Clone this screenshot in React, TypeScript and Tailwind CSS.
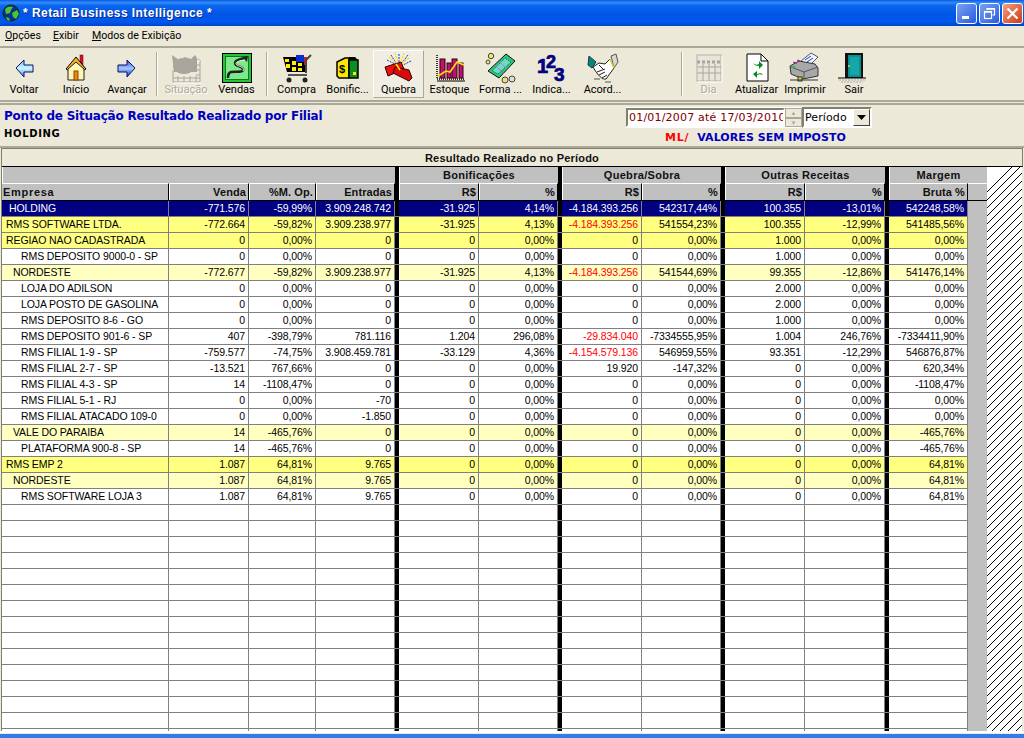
import React from "react";

const W = { e: "w-[167px]", v: "w-[80px]", m: "w-[67px]", n: "w-[79px]", a: "w-[80px]", b: "w-[79px]", c: "w-[80px]", d: "w-[79px]", f: "w-[80px]", g: "w-[80px]", h: "w-[79px]" };

type Row = { name: string; pad: string; bg: string; t?: string; red?: boolean; v: string[] };
const Y = "bg-[#ffff80]";
const L = "bg-[#ffffc0]";
const N = "bg-white";
const rows: Row[] = [
  { name: "HOLDING", pad: "pl-[7px]", bg: "bg-[#000080]", t: "text-white", v: ["-771.576", "-59,99%", "3.909.248.742", "-31.925", "4,14%", "-4.184.393.256", "542317,44%", "100.355", "-13,01%", "542248,58%"] },
  { name: "RMS SOFTWARE LTDA.", pad: "pl-[4px]", bg: Y, red: true, v: ["-772.664", "-59,82%", "3.909.238.977", "-31.925", "4,13%", "-4.184.393.256", "541554,23%", "100.355", "-12,99%", "541485,56%"] },
  { name: "REGIAO NAO CADASTRADA", pad: "pl-[4px]", bg: Y, v: ["0", "0,00%", "0", "0", "0,00%", "0", "0,00%", "1.000", "0,00%", "0,00%"] },
  { name: "RMS DEPOSITO 9000-0 - SP", pad: "pl-[19px]", bg: N, v: ["0", "0,00%", "0", "0", "0,00%", "0", "0,00%", "1.000", "0,00%", "0,00%"] },
  { name: "NORDESTE", pad: "pl-[11px]", bg: L, red: true, v: ["-772.677", "-59,82%", "3.909.238.977", "-31.925", "4,13%", "-4.184.393.256", "541544,69%", "99.355", "-12,86%", "541476,14%"] },
  { name: "LOJA DO ADILSON", pad: "pl-[19px]", bg: N, v: ["0", "0,00%", "0", "0", "0,00%", "0", "0,00%", "2.000", "0,00%", "0,00%"] },
  { name: "LOJA POSTO DE GASOLINA", pad: "pl-[19px]", bg: N, v: ["0", "0,00%", "0", "0", "0,00%", "0", "0,00%", "2.000", "0,00%", "0,00%"] },
  { name: "RMS DEPOSITO 8-6 - GO", pad: "pl-[19px]", bg: N, v: ["0", "0,00%", "0", "0", "0,00%", "0", "0,00%", "1.000", "0,00%", "0,00%"] },
  { name: "RMS DEPOSITO 901-6 - SP", pad: "pl-[19px]", bg: N, red: true, v: ["407", "-398,79%", "781.116", "1.204", "296,08%", "-29.834.040", "-7334555,95%", "1.004", "246,76%", "-7334411,90%"] },
  { name: "RMS FILIAL 1-9 - SP", pad: "pl-[19px]", bg: N, red: true, v: ["-759.577", "-74,75%", "3.908.459.781", "-33.129", "4,36%", "-4.154.579.136", "546959,55%", "93.351", "-12,29%", "546876,87%"] },
  { name: "RMS FILIAL 2-7 - SP", pad: "pl-[19px]", bg: N, v: ["-13.521", "767,66%", "0", "0", "0,00%", "19.920", "-147,32%", "0", "0,00%", "620,34%"] },
  { name: "RMS FILIAL 4-3 - SP", pad: "pl-[19px]", bg: N, v: ["14", "-1108,47%", "0", "0", "0,00%", "0", "0,00%", "0", "0,00%", "-1108,47%"] },
  { name: "RMS FILIAL 5-1 - RJ", pad: "pl-[19px]", bg: N, v: ["0", "0,00%", "-70", "0", "0,00%", "0", "0,00%", "0", "0,00%", "0,00%"] },
  { name: "RMS FILIAL ATACADO 109-0", pad: "pl-[19px]", bg: N, v: ["0", "0,00%", "-1.850", "0", "0,00%", "0", "0,00%", "0", "0,00%", "0,00%"] },
  { name: "VALE DO PARAIBA", pad: "pl-[11px]", bg: L, v: ["14", "-465,76%", "0", "0", "0,00%", "0", "0,00%", "0", "0,00%", "-465,76%"] },
  { name: "PLATAFORMA 900-8 - SP", pad: "pl-[19px]", bg: N, v: ["14", "-465,76%", "0", "0", "0,00%", "0", "0,00%", "0", "0,00%", "-465,76%"] },
  { name: "RMS EMP 2", pad: "pl-[4px]", bg: Y, v: ["1.087", "64,81%", "9.765", "0", "0,00%", "0", "0,00%", "0", "0,00%", "64,81%"] },
  { name: "NORDESTE", pad: "pl-[11px]", bg: L, v: ["1.087", "64,81%", "9.765", "0", "0,00%", "0", "0,00%", "0", "0,00%", "64,81%"] },
  { name: "RMS SOFTWARE LOJA 3", pad: "pl-[19px]", bg: N, v: ["1.087", "64,81%", "9.765", "0", "0,00%", "0", "0,00%", "0", "0,00%", "64,81%"] },
];
const blank: Row = { name: "", pad: "", bg: N, v: ["", "", "", "", "", "", "", "", "", ""] };
const allRows = [...rows, ...Array.from({ length: 15 }, () => blank)];
const widths = [W.v, W.m, W.n, W.a, W.b, W.c, W.d, W.f, W.g, W.h];
const blackAfter = [2, 4, 6, 8];

function Black() {
  return <div className="w-[4px] shrink-0 self-stretch bg-black" />;
}

function Cell({ w, children, cls = "" }: { w: string; children?: React.ReactNode; cls?: string }) {
  return <div className={`${w} ${cls} shrink-0 h-full border-r border-[#808080] text-right pr-[3px] whitespace-nowrap overflow-hidden`}>{children}</div>;
}

function DataRow({ r }: { r: Row }) {
  return (
    <div className={`flex h-[16px] border-b border-[#808080] leading-[15px] text-[10.5px] tracking-[-0.1px] ${r.bg} ${r.t ?? "text-black"}`}>
      <div className={`w-[167px] shrink-0 border-r border-[#808080] whitespace-nowrap overflow-hidden ${r.pad}`}>{r.name}</div>
      {r.v.map((val, i) => (
        <React.Fragment key={i}>
          <Cell w={widths[i]} cls={r.red && i === 5 ? "text-[#ff0000]" : ""}>{val}</Cell>
          {blackAfter.includes(i) && <Black />}
        </React.Fragment>
      ))}
    </div>
  );
}

const headCls = "shrink-0 h-full bg-[#c0c0c0] border-t border-l border-t-white border-l-white border-r border-r-black font-bold leading-[16px] pr-[2px] text-right text-[#111]";

function Head({ w, children, left }: { w: string; children: React.ReactNode; left?: boolean }) {
  return <div className={`${w} ${headCls} ${left ? "!text-left tracking-[0.7px] !border-l-0 pl-[1px]" : "tracking-[0.1px]"}`}>{children}</div>;
}

function Group({ w, children }: { w: string; children?: React.ReactNode }) {
  return <div className={`${w} shrink-0 h-full bg-[#c0c0c0] border-l border-white text-center font-bold tracking-[0.3px] leading-[17px] text-[#111]`}>{children}</div>;
}

/* ------- icons ------- */
const Arrow = ({ right }: { right?: boolean }) => (
  <svg width="32" height="32" viewBox="0 0 32 32" className={right ? "-scale-x-100" : ""}>
    <defs>
      <linearGradient id={right ? "ar" : "al"} x1="0" x2="0" y1="0" y2="1">
        <stop offset="0" stopColor={right ? "#2a50f0" : "#60c8ff"} />
        <stop offset="0.5" stopColor={right ? "#a0c8ff" : "#d0f4ff"} />
        <stop offset="1" stopColor={right ? "#1030e0" : "#1d86e0"} />
      </linearGradient>
    </defs>
    <path d="M8 16 16 8v5h9v7h-9v5z" fill={`url(#${right ? "ar" : "al"})`} stroke="#10106a" strokeWidth="1" />
  </svg>
);
const House = () => (
  <svg width="32" height="32" viewBox="0 0 32 32">
    <rect x="20" y="3" width="3" height="10" fill="#d01030" stroke="#700" strokeWidth=".5" />
    <path d="M6 17 16 5l10 12-2 1-8-8-8 8z" fill="#ffb020" stroke="#000" strokeWidth="1" />
    <path d="M8 17l8-7 8 7v11H8z" fill="#fff6b8" stroke="#222" strokeWidth="1" />
    <rect x="14" y="19" width="4" height="9" fill="#e88a10" stroke="#8a4a00" strokeWidth="1" />
  </svg>
);
const Situacao = () => (
  <svg width="32" height="32" viewBox="0 0 32 32">
    <path d="M2 3l7 5 6-3 6 2 4-4 2 3v14H4z" fill="#a8a69c" />
    <ellipse cx="14" cy="14" rx="11" ry="8" fill="#a8a69c" />
    <path d="M26 8h4v22H3V18M26 13h4M26 18h4M26 23h4M8 24v6M14 24v6M20 24v6M26 24v6M3 26h27" fill="none" stroke="#a8a69c" strokeWidth="1" />
    <path d="M27 9h3M4 31h27" stroke="#fff" strokeWidth="1" />
  </svg>
);
const Vendas = () => (
  <svg width="30" height="30" viewBox="0 0 30 30">
    <rect x="0.5" y="0.5" width="29" height="29" fill="#27c33b" stroke="#000" />
    <rect x="3.5" y="3.5" width="23" height="23" fill="#7ee88a" stroke="#0a7a1a" />
    <path d="M24 5C15 6 11 9 14 12c3 2 8 2 7 5-1 3-8 1-12 2-3 1-3 3-3 6" fill="none" stroke="#222" strokeWidth="2.5" />
    <path d="M20 4l6-1-1 6z" fill="#222" />
    <path d="M23 7C15 8 12 10 15 12c3 2 8 2 6 6" fill="none" stroke="#d8ffd8" strokeWidth="1" />
  </svg>
);
const Cart = () => (
  <svg width="32" height="32" viewBox="0 0 32 32">
    <path d="M2 5h24v15H6z" fill="#000" />
    <path d="M4 7h4v3H4zM5 12h4v4H5zM11 9h4v4h-4zM11 15h4v4h-4zM17 11h4v3h-4zM17 16h4v3h-4z" fill="#ffee00" />
    <rect x="15" y="3" width="8" height="7" fill="#0a2bd0" />
    <rect x="23" y="5" width="3" height="8" fill="#e01020" />
    <path d="M25 21V8l5-5" stroke="#444" strokeWidth="2" fill="none" />
    <path d="M7 23h19" stroke="#555" strokeWidth="2" />
    <circle cx="8" cy="28" r="2.5" fill="#222" />
    <circle cx="24" cy="28" r="2.5" fill="#222" />
  </svg>
);
const Bonific = () => (
  <svg width="32" height="32" viewBox="0 0 32 32">
    <path d="M5 10 13 6h4v20H7l-2-2z" fill="#ffe600" stroke="#000" strokeWidth="1.5" />
    <path d="M17 8h9v18H17z" fill="#0b8f24" stroke="#000" strokeWidth="1.5" />
    <path d="M17 5h6l3 3H17z" fill="#000" />
    <rect x="21" y="20" width="3" height="3" fill="#ffe600" />
    <text x="7" y="21" fontFamily="Liberation Sans" fontWeight="700" fontSize="11" fill="#000">$</text>
  </svg>
);
const Dynamite = () => (
  <svg width="32" height="32" viewBox="0 0 32 32">
    <g stroke="#2030d0" strokeWidth="1" strokeDasharray="2 1">
      <path d="M16 2v8M8 3l5 8M25 3l-6 8M4 8l8 4M28 9l-8 4" />
    </g>
    <g stroke="#f0e000" strokeWidth="1.2" strokeDasharray="2 1">
      <path d="M12 1l3 9M21 1l-3 9M6 5l7 6M26 6l-7 5" />
    </g>
    <path d="M2 15 18 10l3 7-16 7z" fill="#ee1010" stroke="#300" strokeWidth="1" />
    <path d="M12 15l14 3 3 8-3 3-16-8z" fill="#d80c0c" stroke="#300" strokeWidth="1" />
    <path d="M13 12l4 6" stroke="#fff000" strokeWidth="1.5" />
  </svg>
);
const Chart = () => (
  <svg width="32" height="32" viewBox="0 0 32 32">
    <path d="M3 3v24h28" stroke="#000" fill="none" strokeWidth="1.5" strokeDasharray="1 1" />
    <rect x="6" y="7" width="5" height="19" fill="#c01070" stroke="#301" />
    <rect x="13" y="11" width="4" height="15" fill="#c01070" stroke="#301" />
    <rect x="18" y="7" width="5" height="19" fill="#c01070" stroke="#301" />
    <rect x="25" y="11" width="4" height="15" fill="#c01070" stroke="#301" />
    <path d="M4 24l8-5 4 1 7-10 7 3" stroke="#ffe000" strokeWidth="1.6" fill="none" />
    <path d="M3 29h28" stroke="#000" />
  </svg>
);
const Forma = () => (
  <svg width="32" height="32" viewBox="0 0 32 32">
    <path d="M3 19 21 2l9 7-16 17z" fill="#28c878" stroke="#111" strokeWidth="1" />
    <path d="M7 19 20 6l6 4-13 12z" fill="#6fd8c8" stroke="#0a6040" strokeWidth="1" strokeDasharray="1 1" />
    <path d="M10 13l9 9M14 9l9 9" stroke="#c060c0" strokeWidth=".7" />
    <circle cx="6" cy="4" r="2.7" fill="#f4e46a" stroke="#444" />
    <circle cx="3" cy="10" r="2" fill="#f4e46a" stroke="#444" />
    <circle cx="20" cy="28" r="3" fill="#e8e070" stroke="#444" />
    <circle cx="27" cy="27" r="3" fill="#ddd" stroke="#444" />
  </svg>
);
const Indica = () => (
  <svg width="32" height="32" viewBox="0 0 32 32" fontFamily="Liberation Sans" fontWeight="700" fill="#000080" stroke="#000080" strokeWidth=".7">
    <text x="1" y="21" fontSize="20">1</text>
    <text x="10" y="16" fontSize="18">2</text>
    <text x="18" y="29" fontSize="19">3</text>
  </svg>
);
const Hands = () => (
  <svg width="32" height="32" viewBox="0 0 32 32">
    <path d="M2 4l7 6-4 6-4-3z" fill="#108080" stroke="#044" />
    <path d="M24 4l5-2 2 8-4 6z" fill="#d8d8d0" stroke="#555" />
    <path d="M6 15l6-4 6 1 5-5 4 9-8 11c-3 1-8-3-13-12z" fill="#fff" stroke="#222" />
    <path d="M10 20l8-3M12 23l6-3M15 26l5-3M12 13l5 5" stroke="#222" fill="none" />
    <path d="M23 7l4 9" stroke="#e8d820" strokeWidth="1.5" />
    <path d="M7 27h6M18 30h6" stroke="#555" />
  </svg>
);
const Calendar = () => (
  <svg width="32" height="32" viewBox="0 0 32 32">
    <rect x="4" y="3" width="24" height="26" fill="#e8e6da" stroke="#b4b2a8" />
    <path d="M4 10h24" stroke="#a8a69c" strokeWidth="3" strokeDasharray="3 2" />
    <path d="M4 15h24M4 21h24M10 12v17M16 12v17M22 12v17" stroke="#a8a69c" />
    <path d="M29 4v26H5" stroke="#fff" fill="none" />
  </svg>
);
const Doc = () => (
  <svg width="32" height="32" viewBox="0 0 32 32">
    <path d="M6 2h14l7 7v20H6z" fill="#fff" stroke="#000" strokeWidth="1" />
    <path d="M20 2v7h7" fill="none" stroke="#000" />
    <path d="M12 11c2 2 4 2 6 1v-3l4 4-4 4v-3c-3 0-5-1-6-3z" fill="#0a8a1a" />
    <path d="M22 20c-2-1-4-1-6 0v3l-4-4 4-3v3c3-1 5-1 6 1z" fill="#0a8a1a" transform="translate(0 3)" />
  </svg>
);
const Printer = () => (
  <svg width="32" height="32" viewBox="0 0 32 32">
    <path d="M12 9 22 1l7 4-9 9z" fill="#f4f4ff" stroke="#556" />
    <path d="M16 8l6-4M18 10l6-4" stroke="#2040c0" />
    <path d="M1 14l9-5 16 3 3 4v8L14 27 2 22z" fill="#a8a8a8" stroke="#333" />
    <path d="M2 15l13 5 14-5M15 20v7" stroke="#555" fill="none" />
    <path d="M4 10l4 1M8 8l3 1" stroke="#a010a0" />
    <path d="M3 15h3" stroke="#20c040" strokeWidth="2" />
    <rect x="9" y="25" width="4" height="4" fill="#e8d820" stroke="#333" />
    <path d="M1 28h28" stroke="#333" />
  </svg>
);
const Door = () => (
  <svg width="32" height="32" viewBox="0 0 32 32">
    <rect x="7" y="1" width="18" height="25" fill="#111" />
    <rect x="10" y="3" width="13" height="22" fill="#0a9090" />
    <rect x="12" y="5" width="9" height="18" fill="#14a8a8" />
    <circle cx="11" cy="14" r="1" fill="#e8d820" />
    <path d="M0 26h28" stroke="#000" strokeWidth="1" />
    <path d="M1 28h26M3 30h22" stroke="#c8c8c0" strokeWidth="2" strokeDasharray="2 1" />
  </svg>
);
const Globe = () => (
  <svg width="18" height="18" viewBox="0 0 18 18">
    <circle cx="9" cy="9" r="8" fill="#0d2f8a" stroke="#0a2a10" />
    <path d="M3 5c3-3 6-3 8-2l-2 3-1 3-4 1zM10 9l5-3 2 4-3 5-3-2zM4 13l3 1 1 3-3-1z" fill="#45c830" />
  </svg>
);

type Btn = { w: string; label: string; icon: React.ReactNode; off?: boolean; on?: boolean };
function Tool({ w, label, icon, off, on }: Btn) {
  return (
    <div className={`${w} shrink-0 h-[48px] flex flex-col items-center border ${on ? "border-t-white border-l-white border-r-[#aca899] border-b-[#aca899] bg-[#f0eee2]" : "border-transparent"}`}>
      <div className="h-[32px] flex items-center justify-center mt-[1px]">{icon}</div>
      <div className={`text-[11px] leading-[11px] whitespace-nowrap ${off ? "text-[#aca899] [text-shadow:1px_1px_0_#fff]" : "text-black"}`}>{label}</div>
    </div>
  );
}
const Divider = ({ cls }: { cls: string }) => <div className={`${cls} shrink-0 w-[2px] h-[44px] border-l border-r border-l-[#aca899] border-r-white`} />;

function WinBtn({ cls, children }: { cls: string; children: React.ReactNode }) {
  return <div className={`${cls} w-[21px] h-[21px] rounded-[3px] border border-white flex items-center justify-center`}>{children}</div>;
}

export default function App() {
  return (
    <div className="w-[1024px] h-[738px] overflow-hidden flex flex-col bg-[#ece9d8] font-['Roboto',sans-serif]">
      {/* title */}
      <div className="h-[26px] shrink-0 flex items-center bg-[linear-gradient(180deg,#0a5ae8_0%,#2f8cf8_10%,#0b66ee_22%,#0055e5_55%,#0058ee_85%,#0042c8_100%)]">
        <div className="ml-[2px] mr-[3px]"><Globe /></div>
        <div className="font-['Liberation_Sans',sans-serif] font-bold text-[12px] tracking-[0.45px] text-white [text-shadow:1px_1px_0_#0a2a90]">* Retail Business Intelligence *</div>
        <div className="ml-auto flex gap-[2px] mr-[1px]">
          <WinBtn cls="bg-[linear-gradient(135deg,#7aa2f0,#2a5be0)]"><div className="w-[7px] h-[3px] bg-white mt-[9px] mr-[2px]" /></WinBtn>
          <WinBtn cls="bg-[linear-gradient(135deg,#7aa2f0,#2a5be0)]">
            <svg width="13" height="13" viewBox="0 0 13 13" fill="none" stroke="#fff"><path d="M4 3V1.5h7.5V8H9.5" strokeWidth="1.2" /><rect x="1.5" y="4.5" width="7" height="7" strokeWidth="1.2" /><path d="M1 5h8M4 2h8" strokeWidth="1.6" /></svg>
          </WinBtn>
          <WinBtn cls="bg-[linear-gradient(135deg,#f0a080,#cc3a14)]">
            <svg width="13" height="13" viewBox="0 0 13 13" stroke="#fff" strokeWidth="2.2"><path d="M1.5 1.5l10 10M11.5 1.5l-10 10" /></svg>
          </WinBtn>
        </div>
      </div>
      {/* menu */}
      <div className="h-[20px] shrink-0 flex items-center pl-[5px] text-[10.6px] text-black">
        <span><u>O</u>pções</span>
        <span className="ml-[12px]"><u>E</u>xibir</span>
        <span className="ml-[13px]"><u>M</u>odos de Exibição</span>
      </div>
      {/* toolbar */}
      <div className="h-[56px] shrink-0 flex items-center border-t-2 border-b-2 border-t-[#aca899] border-b-[#aca899] pl-0">
        <Tool w="w-[48px]" label="Voltar" icon={<Arrow />} />
        <Tool w="w-[56px]" label="Início" icon={<House />} />
        <Tool w="w-[46px]" label="Avançar" icon={<Arrow right />} />
        <Divider cls="ml-[6px] mr-[3px]" />
        <Tool w="w-[50px]" label="Situação" off icon={<Situacao />} />
        <Tool w="w-[51px]" label="Vendas" icon={<Vendas />} />
        <Divider cls="ml-[4px] mr-[3px]" />
        <Tool w="w-[51px]" label="Compra" icon={<Cart />} />
        <Tool w="w-[51px]" label="Bonific..." icon={<Bonific />} />
        <Tool w="w-[51px]" on label="Quebra" icon={<Dynamite />} />
        <Tool w="w-[51px]" label="Estoque" icon={<Chart />} />
        <Tool w="w-[51px]" label="Forma ..." icon={<Forma />} />
        <Tool w="w-[51px]" label="Indica..." icon={<Indica />} />
        <Tool w="w-[51px]" label="Acord..." icon={<Hands />} />
        <Divider cls="ml-[53px] mr-[1px]" />
        <Tool w="w-[49px]" label="Dia" off icon={<Calendar />} />
        <Tool w="w-[47px]" label="Atualizar" icon={<Doc />} />
        <Tool w="w-[50px]" label="Imprimir" icon={<Printer />} />
        <Tool w="w-[48px]" label="Sair" icon={<Door />} />
      </div>
      {/* info panel */}
      <div className="h-[45px] shrink-0 mt-[1px] border-t-2 border-b-2 border-t-[#aca899] border-b-[#aca899] flex justify-between pl-[4px] pr-[152px]">
        <div className="font-['DejaVu_Sans',sans-serif] font-bold">
          <div className="text-[12px] leading-[14px] mt-[4px] text-[#0000c0] tracking-[-0.22px]">Ponto de Situação Resultado Realizado por Filial</div>
          <div className="text-[10px] leading-[14px] mt-[4px] text-black tracking-[0.65px]">HOLDING</div>
        </div>
        <div className="w-[246px] flex flex-col mt-[2px]">
          <div className="flex items-center h-[21px] bg-white">
            <div className="w-[159px] h-[19px] border-2 border-t-[#808070] border-l-[#808070] border-r-transparent border-b-white pl-[1px] overflow-hidden whitespace-nowrap font-['DejaVu_Sans',sans-serif] text-[11px] leading-[15px] text-[#800000] tracking-[0.2px]">01/01/2007 até 17/03/2010</div>
            <div className="w-[17px] h-[19px] bg-[#ece9d8] flex flex-col shrink-0">
              <div className="h-[10px] border border-[#aca899] flex items-center justify-center text-[#aca899] text-[6px] leading-none">▲</div>
              <div className="h-[9px] border border-[#aca899] flex items-center justify-center text-[#aca899] text-[6px] leading-none">▼</div>
            </div>
            <div className="w-[70px] h-[21px] flex items-center border-2 border-t-[#808070] border-l-[#808070] border-r-white border-b-white bg-white shrink-0">
              <div className="flex-1 pl-[1px] font-['DejaVu_Sans',sans-serif] text-[11px] text-black leading-none tracking-[0.1px]">Período</div>
              <div className="w-[17px] h-[17px] bg-[#ece9d8] border border-t-white border-l-white border-r-[#404040] border-b-[#404040] flex items-center justify-center">
                <svg width="9" height="5" viewBox="0 0 9 5"><path d="M0 0h9L4.5 5z" fill="#000" /></svg>
              </div>
            </div>
          </div>
          <div className="flex mt-[3px] ml-[39px] font-['DejaVu_Sans',sans-serif] font-bold text-[11px] leading-[14px]">
            <span className="text-[#ff0000] mr-[8px] tracking-[0.75px]">ML/</span>
            <span className="text-[#0000c0] tracking-[0.07px]">VALORES SEM IMPOSTO</span>
          </div>
        </div>
      </div>
      {/* grid */}
      <div className="h-[583px] shrink-0 ml-[1px] border-l border-[#808070] w-[1022px] flex flex-col font-['Liberation_Sans',sans-serif] text-[11px] overflow-hidden">
        <div className="h-[19px] shrink-0 border-t border-b border-t-[#808070] border-b-black border-r border-r-[#808070] text-center font-bold tracking-[0.2px] leading-[18px] text-[#111]">Resultado Realizado no Período</div>
        <div className="flex flex-1 min-h-0">
          <div className="w-[985px] shrink-0 flex flex-col min-h-0 bg-[#c0c0c0]">
            <div className="flex h-[16px] shrink-0">
              <Group w="w-[393px]" />
              <Black />
              <Group w="w-[159px]">Bonificações</Group>
              <Black />
              <Group w="w-[159px]">Quebra/Sobra</Group>
              <Black />
              <Group w="w-[160px]">Outras Receitas</Group>
              <Black />
              <Group w="w-[98px]">Margem</Group>
            </div>
            <div className="flex h-[18px] shrink-0 border-b border-black">
              <Head w={W.e} left>Empresa</Head>
              <Head w={W.v}>Venda</Head>
              <Head w={W.m}>%M. Op.</Head>
              <Head w={W.n}>Entradas</Head>
              <Black />
              <Head w={W.a}>R$</Head>
              <Head w={W.b}>%</Head>
              <Black />
              <Head w={W.c}>R$</Head>
              <Head w={W.d}>%</Head>
              <Black />
              <Head w={W.f}>R$</Head>
              <Head w={W.g}>%</Head>
              <Black />
              <Head w={W.h}>Bruta %</Head>
              <div className="w-[19px] h-full border-t border-white" />
            </div>
            <div className="flex-1 min-h-0 overflow-hidden flex">
              <div className="w-[966px] shrink-0">
                {allRows.map((r, i) => <DataRow key={i} r={r} />)}
              </div>
            </div>
          </div>
          <div className="w-[35px] shrink-0 bg-[repeating-linear-gradient(135deg,#000_0,#000_0.7px,#fff_0.7px,#fff_5.66px)]" />
        </div>
      </div>
      <div className="flex-1 border-t-2 border-white" />
      <div className="h-[4px] shrink-0 bg-[#2f7ee8]" />
    </div>
  );
}
